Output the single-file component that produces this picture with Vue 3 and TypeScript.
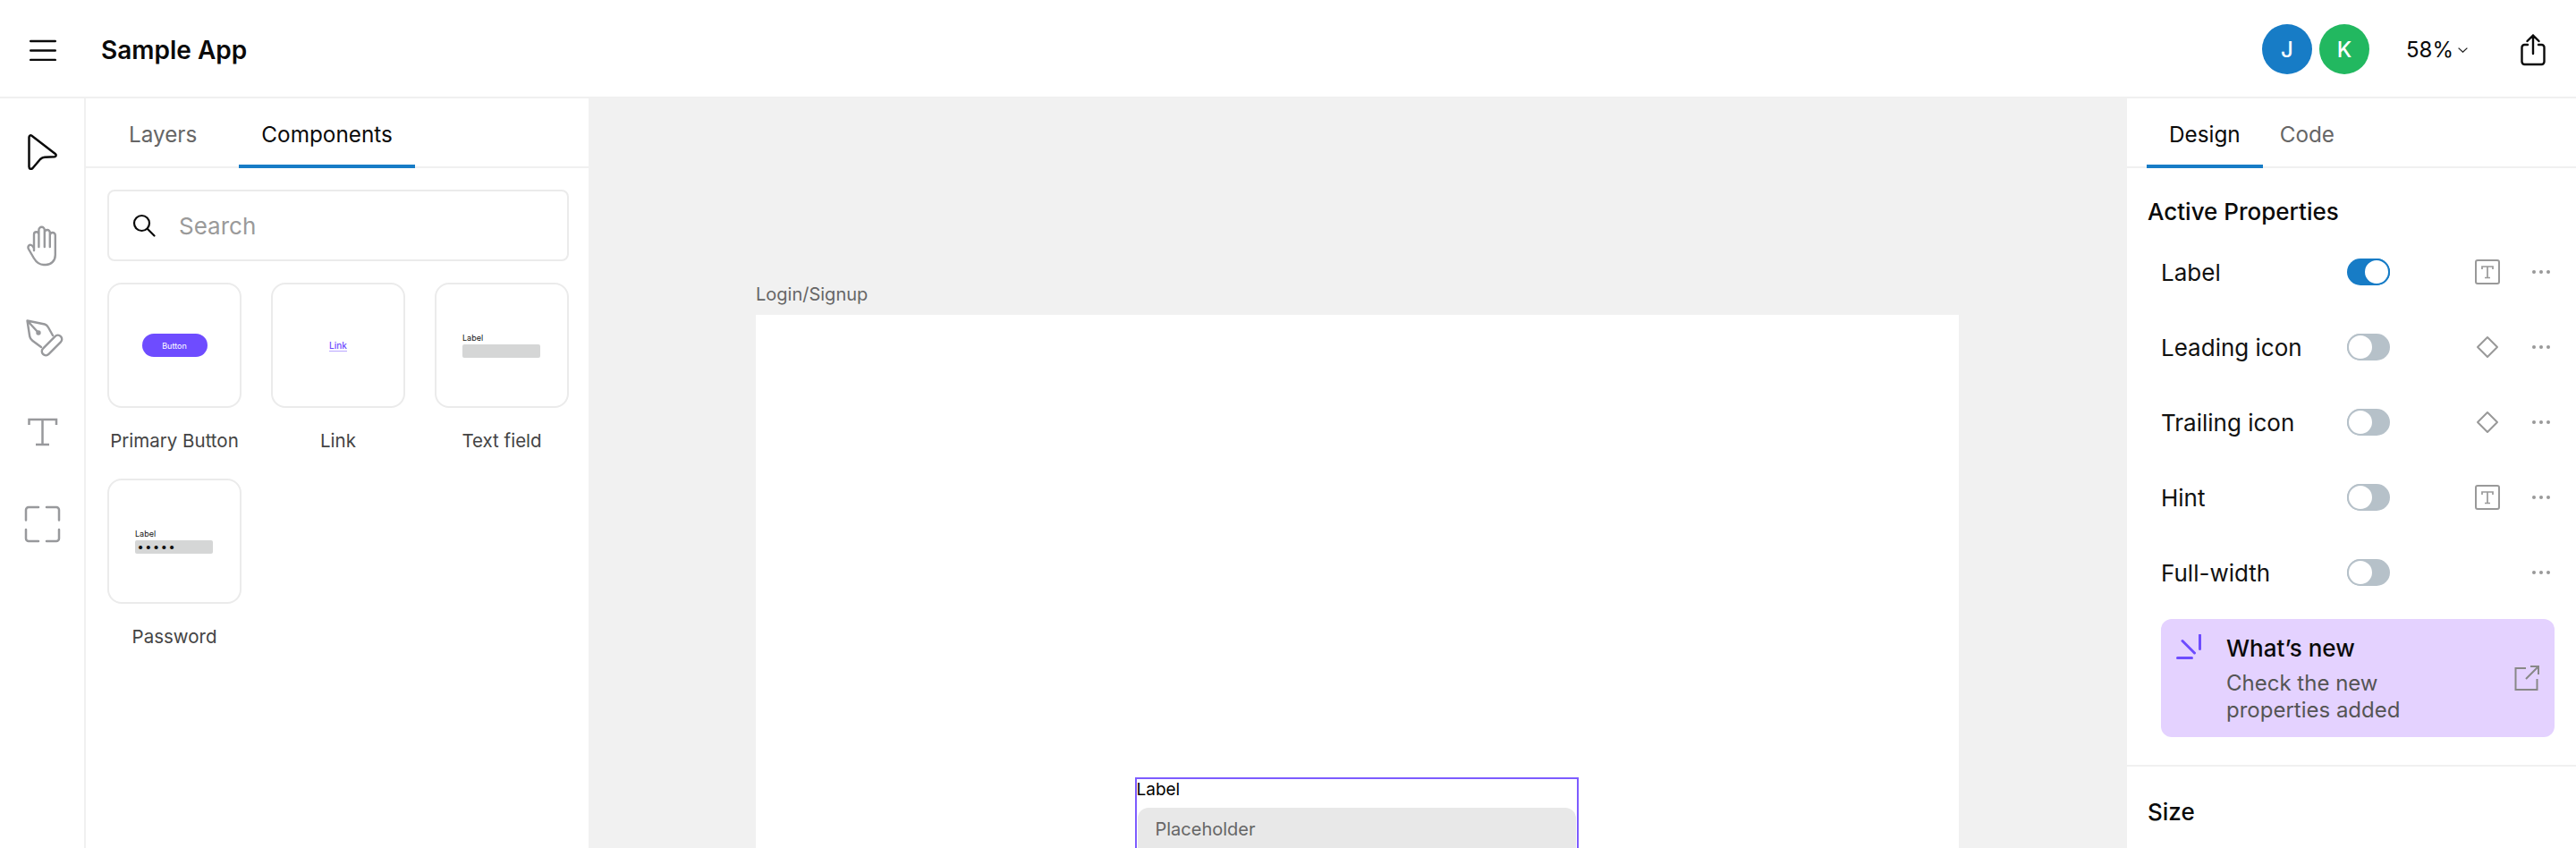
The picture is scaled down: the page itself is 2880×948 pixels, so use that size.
<script setup lang="ts">
interface Comp { name: string; kind: 'button' | 'link' | 'field' | 'password' }
interface Prop { name: string; on: boolean; icon: 'text' | 'diamond' | null }
const comps: Comp[] = [
  { name: 'Primary Button', kind: 'button' },
  { name: 'Link', kind: 'link' },
  { name: 'Text field', kind: 'field' },
  { name: 'Password', kind: 'password' },
]
const props: Prop[] = [
  { name: 'Label', on: true, icon: 'text' },
  { name: 'Leading icon', on: false, icon: 'diamond' },
  { name: 'Trailing icon', on: false, icon: 'diamond' },
  { name: 'Hint', on: false, icon: 'text' },
  { name: 'Full-width', on: false, icon: null },
]
</script>

<template>
  <div class="app">
    <header class="top">
      <svg class="burger" width="30" height="24" viewBox="0 0 30 24" fill="none" stroke="#0a0a0a" stroke-width="2.4" stroke-linecap="round"><path d="M1.2 2H28.8M1.2 12.5H28.8M1.2 23H28.8" /></svg>
      <div class="title">Sample App</div>
      <div class="top-right">
        <div class="avatar blue">J</div>
        <div class="avatar green">K</div>
        <div class="zoom">58%</div>
        <svg class="chev" width="11" height="6" viewBox="0 0 11 6" fill="none" stroke="#222" stroke-width="1.3"><path d="M.6.6 5.5 5.2 10.4.6" /></svg>
        <svg class="share" width="28" height="36" viewBox="0 0 28 36" fill="none" stroke="#0a0a0a" stroke-width="2.4" stroke-linecap="round" stroke-linejoin="round"><path d="M8 12H4.500a3 3 0 0 0-3 3v16a3 3 0 0 0 3 3h19a3 3 0 0 0 3-3V15a3 3 0 0 0-3-3H20M14 22V1.500M7.500 8 14 1.500 20.500 8" /></svg>
      </div>
    </header>

    <div class="body">
      <nav class="rail">
        <svg width="44" height="44" viewBox="0 0 44 44" fill="none" stroke="#0a0a0a" stroke-width="2.5" stroke-linejoin="round"><path d="M7.500 5.500C7.500 3.500 9 2.800 10.500 3.800L36.800 24C38.300 25.300 37.800 27 36 27.200L25 27.800C22.800 28 21.500 28.700 20 30L11.500 40C9.800 41.500 7.500 41 7.500 38.500Z" /></svg>
        <svg width="44" height="44" viewBox="0 0 44 44" fill="none" stroke="#98999c" stroke-width="2.400" stroke-linecap="round" stroke-linejoin="round"><path d="M13 28V10a2.700 2.700 0 0 1 5.400 0V5a3.200 3.200 0 0 1 6.400 0v3a3 3 0 0 1 6 0v3a3 3 0 0 1 6 0v22c0 6.500-4.500 11-10.500 11h-2.500c-5 0-8-2.500-11-7.500L7 26.500c-1.500-3 .500-5.500 3-4.500 1.500.600 2.200 2 3 3.500M18.400 10v14M24.800 6v18M30.800 8v16" /></svg>
        <svg class="pen" width="44" height="44" viewBox="0 0 44 44" fill="none" stroke="#98999c" stroke-width="2.400" stroke-linecap="round" stroke-linejoin="round"><path d="M3.500 2.500 23 6.500c2 .500 3 1.500 4 3.500l5 9M19 32 9.500 25c-1.800-1.300-3-3-3.300-5L3.500 2.500 16 16" /><circle cx="16" cy="16" r="1.500" fill="#98999c" /><rect x="-14" y="-4.500" width="28" height="9" rx="4.500" transform="translate(31 30) rotate(-45)" /></svg>
        <svg width="44" height="44" viewBox="0 0 44 44" fill="none" stroke="#98999c" stroke-width="2.500"><path d="M7.500 15V9H38v6M22.500 9v28M15 37h15" /></svg>
        <svg width="44" height="44" viewBox="0 0 44 44" fill="none" stroke="#98999c" stroke-width="2.500" stroke-linecap="round"><path d="M4 17.500V6a3 3 0 0 1 3-3h11M27 3h11a3 3 0 0 1 3 3v11.500M41 28v10a3 3 0 0 1-3 3H27M18 41H7a3 3 0 0 1-3-3V28" /></svg>
      </nav>

      <aside class="left">
        <div class="tabs left-tabs">
          <div class="tab">Layers</div>
          <div class="tab active">Components</div>
        </div>
        <div class="search">
          <svg width="26" height="26" viewBox="0 0 26 26" fill="none" stroke="#0a0a0a" stroke-width="2.200" stroke-linecap="round"><circle cx="10.500" cy="10.500" r="8.500" /><path d="M17 17l7.500 7.500" /></svg>
          <span>Search</span>
        </div>
        <div class="grid">
          <div v-for="c in comps" :key="c.name" class="item">
            <div class="thumb">
              <div v-if="c.kind === 'button'" class="mini-btn">Button</div>
              <div v-else-if="c.kind === 'link'" class="mini-link">Link</div>
              <div v-else class="mini-field">
                <div class="mini-label">Label</div>
                <div class="mini-bar"><span v-if="c.kind === 'password'">•••••</span></div>
              </div>
            </div>
            <div class="item-name">{{ c.name }}</div>
          </div>
        </div>
      </aside>

      <main class="canvas">
        <div class="frame-wrap">
          <div class="frame-name">Login/Signup</div>
          <div class="frame">
            <div class="selected">
              <div class="sel-label">Label</div>
              <div class="sel-input">Placeholder</div>
            </div>
          </div>
        </div>
      </main>

      <aside class="right">
        <div class="tabs right-tabs">
          <div class="tab active">Design</div>
          <div class="tab">Code</div>
        </div>
        <h2 class="section first">Active Properties</h2>
        <div class="rows">
          <div v-for="p in props" :key="p.name" class="row">
            <span class="row-name">{{ p.name }}</span>
            <span class="toggle" :class="{ on: p.on }"><i /></span>
            <span class="row-icon">
              <svg v-if="p.icon === 'text'" width="28" height="28" viewBox="0 0 28 28" fill="none" stroke="#999" stroke-width="2"><rect x="1" y="1" width="26" height="26" rx="2" /><path d="M8 11V8h12v3M14 8v12.500M11 20.500h6" stroke-width="1.700" /></svg>
              <svg v-else-if="p.icon === 'diamond'" width="28" height="28" viewBox="0 0 28 28" fill="none" stroke="#999" stroke-width="2" stroke-linejoin="round"><path d="M14 3 25 14 14 25 3 14Z" /></svg>
            </span>
            <svg class="dots" width="20" height="6" viewBox="0 0 20 6" fill="#999"><circle cx="2" cy="3" r="2" /><circle cx="10" cy="3" r="2" /><circle cx="18" cy="3" r="2" /></svg>
          </div>
        </div>
        <div class="news">
          <svg class="news-icon" width="28" height="28" viewBox="0 0 28 28" fill="none" stroke="#6e4cff" stroke-width="3" stroke-linecap="round"><path d="M26.500 1v15.500M7 7.500l13.500 13.500M1.500 26.500h16" /></svg>
          <div class="news-text">
            <div class="news-title">What’s new</div>
            <div class="news-desc">Check the new<br />properties added</div>
          </div>
          <svg class="news-link" width="28" height="28" viewBox="0 0 28 28" fill="none" stroke="#888" stroke-width="2"><path d="M13 3H1.500v24h24V15M13 15 27 1M18 1h9v9" /></svg>
        </div>
        <h2 class="section size">Size</h2>
      </aside>
    </div>
  </div>
</template>

<style scoped>
.app {
  width: 2880px;
  height: 948px;
  overflow: hidden;
  display: flex;
  flex-direction: column;
  background: #fff;
  font-family: Inter, "Liberation Sans", sans-serif;
  color: #0a0a0a;
}
.top {
  height: 110px;
  flex: none;
  box-sizing: border-box;
  border-bottom: 2px solid #f0f0f0;
  display: flex;
  align-items: center;
  padding: 3px 34px 0 33px;
}
.burger { margin-right: 50px; }
.title { font-size: 28px; font-weight: 600; }
.top-right { margin-left: auto; display: flex; align-items: center; }
.avatar {
  width: 56px;
  height: 56px;
  border-radius: 50%;
  color: #fff;
  font-size: 24px;
  font-weight: 500;
  display: flex;
  align-items: center;
  justify-content: center;
  margin-top: -1px;
}
.blue { background: #177cc6; margin-right: 8px; }
.green { background: #22b860; margin-right: 41px; }
.zoom { font-size: 24px; width: 48px; white-space: nowrap; }
.chev { margin: 0 0 0 10px; }
.share { margin-left: 59px; }
.body { flex: 1; display: flex; min-height: 0; }
.rail {
  width: 96px;
  flex: none;
  box-sizing: border-box;
  border-right: 2px solid #f0f0f0;
  display: flex;
  flex-direction: column;
  align-items: center;
  gap: 60px;
  padding-top: 38px;
}
.rail svg { overflow: visible; }
.rail .pen { transform: translateX(2px); }
.left {
  width: 562px;
  flex: none;
}
.tabs {
  height: 78px;
  box-sizing: border-box;
  border-bottom: 2px solid #f0f0f0;
  display: flex;
}
.left-tabs { padding-left: 23px; gap: 22px; }
.right-tabs { padding-left: 22px; }
.right-tabs .tab:last-child { margin-left: -6px; }
.tab {
  height: 78px;
  box-sizing: border-box;
  padding: 2px 25px 0;
  display: flex;
  align-items: center;
  font-size: 24.300px;
  color: #666;
}
.tab.active { color: #0a0a0a; border-bottom: 4px solid #177cc6; padding-top: 6px; }
.search {
  margin: 24px 22px 0 24px;
  height: 80px;
  box-sizing: border-box;
  border: 2px solid #ebebeb;
  border-radius: 8px;
  display: flex;
  align-items: center;
  padding-left: 26px;
  gap: 26px;
  font-size: 26px;
  color: #9a9a9a;
}
.grid {
  display: grid;
  grid-template-columns: repeat(3, 150px);
  column-gap: 33px;
  margin: 24px 0 0 24px;
}
.item { height: 219px; display: flex; flex-direction: column; align-items: center; }
.thumb {
  width: 150px;
  height: 140px;
  flex: none;
  box-sizing: border-box;
  border: 2px solid #ebebeb;
  border-radius: 16px;
  display: flex;
  align-items: center;
  justify-content: center;
}
.item-name { margin-top: 24px; font-size: 20.500px; line-height: 26px; color: #444; white-space: nowrap; }
.mini-btn {
  width: 73px;
  height: 26px;
  border-radius: 13px;
  background: #6e4cff;
  color: #fff;
  font-size: 9px;
  display: flex;
  align-items: center;
  justify-content: center;
}
.mini-link {
  font-size: 10px;
  font-weight: 500;
  color: #6e4cff;
  border-bottom: 1px solid #b9a6ff;
  line-height: 12px;
}
.mini-field { width: 87px; margin-left: -1px; }
.mini-label { font-size: 9px; line-height: 12px; color: #111; margin-bottom: 1px; }
.mini-bar {
  height: 15px;
  border-radius: 2px;
  background: #d5d6d6;
  font-size: 13px;
  font-weight: 700;
  line-height: 15px;
  letter-spacing: 2.600px;
  padding-left: 3px;
  color: #111;
}
.canvas {
  flex: 1;
  min-width: 0;
  background: #f1f1f1;
  display: flex;
  justify-content: center;
}
.frame-wrap { width: 1345px; padding-top: 206px; margin-right: 1px; }
.frame-name { font-size: 20px; line-height: 26px; color: #666; margin-bottom: 10px; }
.frame {
  background: #fff;
  height: 900px;
  display: flex;
  justify-content: center;
  padding-top: 517px;
  padding-right: 2px;
  box-sizing: border-box;
}
.selected {
  width: 496px;
  height: 200px;
  box-sizing: border-box;
  border: 2px solid #7d5cff;
}
.sel-label { font-size: 19px; line-height: 24px; color: #000; }
.sel-input {
  margin: 8px 1px 0 1px;
  height: 90px;
  box-sizing: border-box;
  padding: 10px 0 0 20px;
  border-radius: 12px;
  background: #e8e8e8;
  font-size: 20px;
  line-height: 28px;
  color: #666;
}
.right { width: 502px; flex: none; }
.section {
  margin: 0;
  padding-left: 23px;
  font-size: 26px;
  font-weight: 500;
  line-height: 30px;
}
.section.first { margin-top: 34px; }
.rows { margin-top: 10px; }
.row {
  height: 84px;
  padding-left: 38px;
  display: grid;
  grid-template-columns: 208px 48px 159px 20px;
  align-items: center;
}
.row-name { font-size: 26px; color: #111; }
.row-icon { margin-left: 95px; height: 28px; }
.row-icon svg { display: block; }
.dots { grid-column: 4; }
.toggle {
  width: 48px;
  height: 30px;
  box-sizing: border-box;
  border-radius: 15px;
  background: #b6c1c9;
  position: relative;
  display: block;
}
.toggle i {
  position: absolute;
  left: 0;
  top: 0;
  width: 30px;
  height: 30px;
  box-sizing: border-box;
  border-radius: 50%;
  background: #fff;
  border: 2px solid #b6c1c9;
}
.toggle.on { background: #177cc6; }
.toggle.on i { left: 18px; border-color: #177cc6; }
.news {
  margin: 10px 24px 0 38px;
  height: 132px;
  box-sizing: border-box;
  padding: 17px 17px 0;
  background: #e4d2ff;
  border-radius: 12px;
  display: flex;
}
.news-icon { flex: none; margin-right: 28px; }
.news-title { font-size: 26px; font-weight: 500; line-height: 30px; margin-top: 1px; }
.news-desc { margin-top: 9px; font-size: 24px; line-height: 30px; color: #555; }
.news-link { margin: 35px 0 0 auto; }
.section.size {
  margin-top: 31px;
  border-top: 2px solid #f0f0f0;
  padding-top: 36px;
}
</style>

<style>
html, body { margin: 0; background: #fff; }
</style>
